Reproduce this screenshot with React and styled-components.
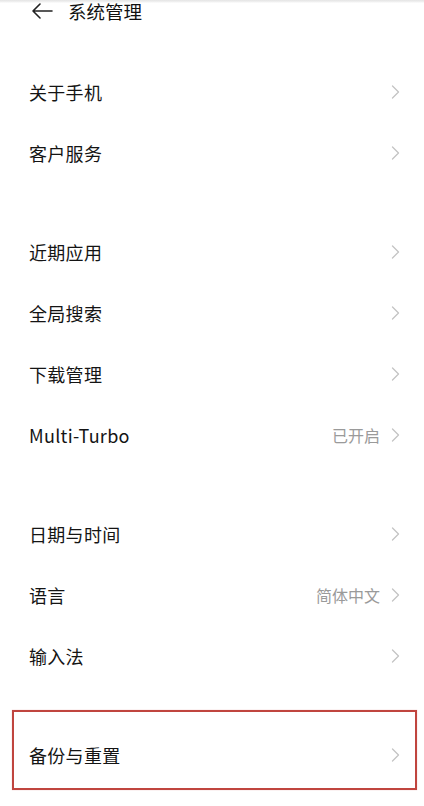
import React from "react";
import styled, { createGlobalStyle } from "styled-components";

const Global = createGlobalStyle`
  html, body { margin: 0; padding: 0; background: #ffffff; }
  body { font-family: "Noto Sans CJK SC", "Noto Sans", sans-serif; -webkit-font-smoothing: antialiased; }
`;

const Page = styled.div`
  width: 424px;
  min-height: 806px;
  background: #fff;
  position: relative;
`;

const Header = styled.div`
  height: 22px;
  display: flex;
  align-items: center;
  padding-left: 31px;
  gap: 15px;
  background: linear-gradient(to bottom, #e4e4e4 0, #f2f2f2 2px, #fff 3px);
  margin-bottom: 39px;
`;

const Title = styled.div`
  font-size: 18.5px;
  color: #111;
  line-height: 22px;
`;

const Group = styled.div`
  position: relative;
  margin-bottom: 38px;
`;

const Row = styled.div`
  height: 61px;
  display: flex;
  align-items: center;
  padding: 0 24px 0 29px;
`;

const Label = styled.div`
  flex: 1;
  font-size: 18px;
  color: #141414;
  letter-spacing: 0.3px;
`;

const Value = styled.div`
  font-size: 16px;
  color: #9a9a9a;
  margin-right: 11px;
`;

const Highlight = styled.div`
  position: absolute;
  left: 12px;
  right: 7px;
  top: -14px;
  height: 80px;
  border: 2px solid #c0453f;
  box-sizing: border-box;
  box-shadow: 0 0 1px rgba(192, 69, 63, 0.4);
  pointer-events: none;
`;

const Back = () => (
  <svg width="22" height="16" viewBox="0 0 22 16">
    <path d="M21 8H2M9 1L2 8l7 7" fill="none" stroke="#222" strokeWidth="1.6" strokeLinecap="round" strokeLinejoin="round" />
  </svg>
);

const Chevron = () => (
  <svg width="9" height="14" viewBox="0 0 9 14">
    <path d="M1.5 1l6 6-6 6" fill="none" stroke="#c4c4c4" strokeWidth="1.3" strokeLinecap="round" strokeLinejoin="round" />
  </svg>
);

const Item = ({ label, value }) => (
  <Row>
    <Label>{label}</Label>
    {value && <Value>{value}</Value>}
    <Chevron />
  </Row>
);

const groups = [
  [{ label: "关于手机" }, { label: "客户服务" }],
  [
    { label: "近期应用" },
    { label: "全局搜索" },
    { label: "下载管理" },
    { label: "Multi-Turbo", value: "已开启" },
  ],
  [{ label: "日期与时间" }, { label: "语言", value: "简体中文" }, { label: "输入法" }],
];

export default function App() {
  return (
    <Page>
      <Global />
      <Header>
        <Back />
        <Title>系统管理</Title>
      </Header>
      {groups.map((g, i) => (
        <Group key={i}>
          {g.map((it) => (
            <Item key={it.label} {...it} />
          ))}
        </Group>
      ))}
      <Group>
        <Highlight />
        <Item label="备份与重置" />
      </Group>
    </Page>
  );
}
